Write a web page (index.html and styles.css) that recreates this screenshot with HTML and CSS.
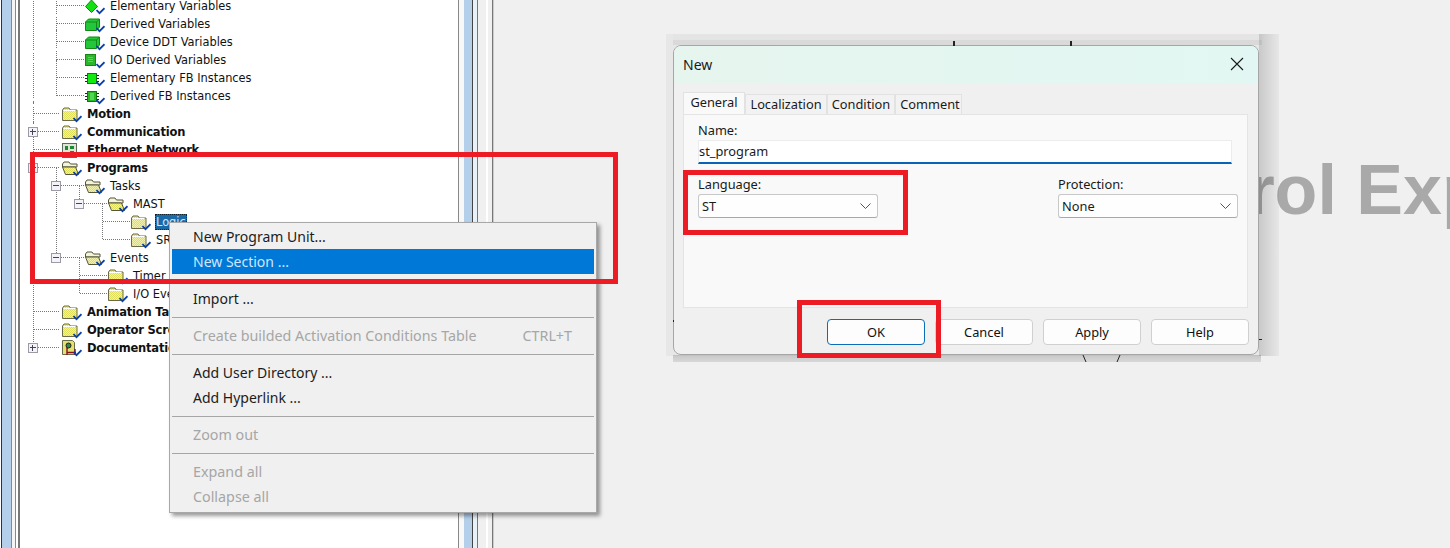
FILE: index.html
```html
<!DOCTYPE html>
<html lang="en">
<head>
<meta charset="utf-8">
<title>Control Expert - New Section</title>
<link rel="stylesheet" href="styles.css">
</head>
<body>
<svg class="defs" width="0" height="0" aria-hidden="true">
  <defs>
    <pattern id="dither" width="2" height="2" patternUnits="userSpaceOnUse">
      <rect width="2" height="2" fill="#dede5c"/>
      <rect width="1" height="1" fill="#f2f2ae"/>
      <rect x="1" y="1" width="1" height="1" fill="#f2f2ae"/>
    </pattern>
    <symbol id="check" viewBox="0 0 20 18"><path d="M11.500 13l3 3.200 5-5" fill="none" stroke="#0a3fa6" stroke-width="1.800"/></symbol>
    <symbol id="folder" viewBox="0 0 20 18">
      <path d="M.5 5L2 3h5l1.500 2h6.500v10.500H.5z" fill="url(#dither)" stroke="#6a6a48"/>
      <path d="M1.500 5.500h12" stroke="#fff" fill="none"/>
      <use href="#check"/>
    </symbol>
    <symbol id="folder-open" viewBox="0 0 20 18">
      <path d="M.5 5L2 3h5l1.500 2h6.500v3H.5z" fill="#f4f4dc" stroke="#555538"/>
      <path d="M.5 8h13l3 7.500H3.500z" fill="url(#dither)" stroke="#555538"/>
      <use href="#check"/>
    </symbol>
    <symbol id="diamond" viewBox="0 0 20 18">
      <path d="M6.500 3l6 6.500-6 6-6-6z" fill="#12e012" stroke="#0c8a0c"/>
      <use href="#check"/>
    </symbol>
    <symbol id="cube" viewBox="0 0 20 18">
      <path d="M.5 7L3.500 4h11v8l-3 3.500H.5z" fill="#22c83a" stroke="#128a12"/>
      <path d="M11.500 15V7l3-3M.5 7h11" fill="none" stroke="#128a12"/>
      <use href="#check"/>
    </symbol>
    <symbol id="square" viewBox="0 0 20 18">
      <rect x=".5" y="3.500" width="10" height="11" fill="#2ab52a" stroke="#128a12"/>
      <path d="M3 6.500h5M3 8.500h5M3 10.500h5" stroke="#5ed05e"/>
      <use href="#check"/>
    </symbol>
    <symbol id="chip" viewBox="0 0 20 18">
      <rect x="2.500" y="4.500" width="9" height="10" fill="#10ea10" stroke="#0c7a0c"/>
      <path d="M0 6.500h2M0 9.500h2M0 12.500h2M12 6.500h2M12 9.500h2M12 12.500h2" stroke="#222"/>
      <use href="#check"/>
    </symbol>
    <symbol id="chip2" viewBox="0 0 20 18">
      <rect x="2.500" y="4.500" width="9" height="10" fill="#28b828" stroke="#0c7a0c"/>
      <rect x="5" y="6" width="4" height="7" fill="#50d850"/>
      <path d="M0 6.500h2M0 9.500h2M0 12.500h2M12 6.500h2M12 9.500h2M12 12.500h2" stroke="#222"/>
      <use href="#check"/>
    </symbol>
    <symbol id="network" viewBox="0 0 20 18">
      <rect x=".5" y="2.500" width="14" height="14" fill="#dfe6d8" stroke="#5c6c5c"/>
      <path d="M3 5h3v4H3zM8 5h4v3H8zM3 12h3v4H3zM8 10h4v6H8z" fill="#1d8a2d"/>
    </symbol>
    <symbol id="doc" viewBox="0 0 20 18">
      <path d="M.5 1.500h10l2 2v12H.5z" fill="#e2e270" stroke="#6a6a48"/>
      <circle cx="6.500" cy="6.500" r="2.500" fill="#2f8a4a" stroke="#222"/>
      <path d="M5 16V9h1M5 13.500h9M13 10v6" fill="none" stroke="#8a1020" stroke-width="1.400"/>
      <use href="#check"/>
    </symbol>
  </defs>
</svg>

<div class="rail rail-left"></div>

<nav class="tree">
  <svg class="tree-lines" width="434" height="548" viewBox="20 0 434 548" aria-hidden="true">
    <path d="M33.500 0V347M56.500 0V95M56.500 167V257M79.500 185V203M79.500 257V293M102.500 203V239
             M57 5H84M57 23H84M57 41H84M57 59H84M57 77H84M57 95H84
             M34 113H60M34 131H60M34 149H60M34 167H60M34 311H60M34 329H60M34 347H60
             M57 185H84M57 257H84M80 203H107M80 275H107M80 293H107M103 221H130M103 239H130"
          fill="none" stroke="#777" stroke-dasharray="1 1" shape-rendering="crispEdges" transform="translate(0 .5)"/>
  </svg>
  <ul class="tree-list">
    <li class="row l1"><svg class="ico"><use href="#diamond"/></svg><span>Elementary Variables</span></li>
    <li class="row l1"><svg class="ico"><use href="#cube"/></svg><span>Derived Variables</span></li>
    <li class="row l1"><svg class="ico"><use href="#cube"/></svg><span>Device DDT Variables</span></li>
    <li class="row l1"><svg class="ico"><use href="#square"/></svg><span>IO Derived Variables</span></li>
    <li class="row l1"><svg class="ico"><use href="#chip"/></svg><span>Elementary FB Instances</span></li>
    <li class="row l1"><svg class="ico"><use href="#chip2"/></svg><span>Derived FB Instances</span></li>
    <li class="row l0 strong"><svg class="ico"><use href="#folder"/></svg><span>Motion</span></li>
    <li class="row l0 strong"><i class="tog plus"></i><svg class="ico"><use href="#folder"/></svg><span>Communication</span></li>
    <li class="row l0 strong"><svg class="ico"><use href="#network"/></svg><span>Ethernet Network</span></li>
    <li class="row l0 strong"><i class="tog minus"></i><svg class="ico"><use href="#folder-open"/></svg><span>Programs</span></li>
    <li class="row l1"><i class="tog minus"></i><svg class="ico"><use href="#folder-open"/></svg><span>Tasks</span></li>
    <li class="row l2"><i class="tog minus"></i><svg class="ico"><use href="#folder-open"/></svg><span>MAST</span></li>
    <li class="row l3"><svg class="ico"><use href="#folder"/></svg><span class="selected">Logic</span></li>
    <li class="row l3"><svg class="ico"><use href="#folder"/></svg><span>SR0</span></li>
    <li class="row l1"><i class="tog minus"></i><svg class="ico"><use href="#folder-open"/></svg><span>Events</span></li>
    <li class="row l2"><svg class="ico"><use href="#folder"/></svg><span>Timer Events</span></li>
    <li class="row l2"><svg class="ico"><use href="#folder"/></svg><span>I/O Events</span></li>
    <li class="row l0 strong"><svg class="ico"><use href="#folder"/></svg><span>Animation Tables</span></li>
    <li class="row l0 strong"><svg class="ico"><use href="#folder"/></svg><span>Operator Screens</span></li>
    <li class="row l0 strong"><i class="tog plus"></i><svg class="ico"><use href="#doc"/></svg><span>Documentation</span></li>
  </ul>
</nav>

<div class="rail rail-right"></div>

<main class="canvas">
  <div class="splash">Control Expert</div>
</main>

<div class="backdrop">
  <i class="tick tick-a"></i><i class="tick tick-b"></i><i class="tick tick-c"></i><i class="tick tick-d"></i>
  <svg class="arc" width="40" height="8" viewBox="0 0 40 8" aria-hidden="true"><path d="M1 0l3 7M38 0l-3 7" fill="none" stroke="#222"/></svg>
</div>

<section class="dialog">
  <header class="dialog-title">
    <span>New</span>
    <svg class="close" width="14" height="14" viewBox="0 0 14 14" aria-hidden="true"><path d="M1 1l12 12M13 1L1 13" fill="none" stroke="#1a1a1a" stroke-width="1.100"/></svg>
  </header>
  <div class="tabs">
    <span class="tab active">General</span>
    <span class="tab tab-loc">Localization</span>
    <span class="tab tab-cond">Condition</span>
    <span class="tab tab-com">Comment</span>
  </div>
  <div class="panel">
    <label class="field-label">Name:</label>
    <div class="input">st_program</div>
    <div class="field-row">
      <div class="field">
        <label class="field-label">Language:</label>
        <div class="combo"><span>ST</span><svg class="chev" width="11" height="6" viewBox="0 0 11 6" aria-hidden="true"><path d="M.5.500l5 5 5-5" fill="none" stroke="#555"/></svg></div>
      </div>
      <div class="field">
        <label class="field-label">Protection:</label>
        <div class="combo"><span>None</span><svg class="chev" width="11" height="6" viewBox="0 0 11 6" aria-hidden="true"><path d="M.5.500l5 5 5-5" fill="none" stroke="#555"/></svg></div>
      </div>
    </div>
  </div>
  <div class="actions">
    <button class="btn primary">OK</button>
    <button class="btn">Cancel</button>
    <button class="btn">Apply</button>
    <button class="btn">Help</button>
  </div>
</section>

<ul class="menu">
  <li class="item">New Program Unit...</li>
  <li class="item hot">New Section ...</li>
  <li class="sep"></li>
  <li class="item">Import ...</li>
  <li class="sep"></li>
  <li class="item off"><span>Create builded Activation Conditions Table</span><span>CTRL+T</span></li>
  <li class="sep"></li>
  <li class="item">Add User Directory ...</li>
  <li class="item">Add Hyperlink ...</li>
  <li class="sep"></li>
  <li class="item off">Zoom out</li>
  <li class="sep"></li>
  <li class="item off">Expand all</li>
  <li class="item off">Collapse all</li>
</ul>

<div class="mark mark-tree"></div>
<div class="mark mark-lang"></div>
<div class="mark mark-ok"></div>
</body>
</html>
```

FILE: styles.css
```css
* { box-sizing: border-box; }
html, body { margin: 0; padding: 0; }
body {
  position: relative;
  display: flex;
  width: 1450px;
  height: 548px;
  overflow: hidden;
  background: #f0f0f0;
  font-family: "Noto Sans", sans-serif;
  color: #1a1a1a;
}
.defs { position: absolute; }
ul { list-style: none; margin: 0; padding: 0; }

/* splitter rails */
.rail { flex: none; height: 100%; }
.rail-left {
  width: 20px;
  background: linear-gradient(90deg,
    #fff 0 1px, #333 1px 2px, #b4cfe9 2px 11px, #888 11px 12px,
    #f4f4f4 12px 15px, #888 15px 16px, #fff 16px 18px, #777 18px 20px);
}
.rail-right {
  width: 40px;
  background: linear-gradient(90deg,
    #fff 0 4px, #888 4px 5px, #f8f8f8 5px 10px, #b4cfe9 10px 18px, #444 18px 19px,
    #e8f0f8 19px 23px, #777 23px 24px, #f0f0f0 24px 32px, #fff 32px 34px,
    #f0f0f0 34px 38px, #777 38px 39px, #ccc 39px 40px);
}

/* tree */
.tree {
  position: relative;
  flex: none;
  width: 434px;
  height: 100%;
  background: #fff;
  overflow: hidden;
  font-family: "DejaVu Sans", sans-serif;
  font-size: 11.4px;
  color: #111;
}
.tree-lines { position: absolute; left: 0; top: 0; }
.tree-list { position: relative; margin-top: -3px; }
.row {
  position: relative;
  display: flex;
  align-items: center;
  height: 18px;
  white-space: nowrap;
}
.l0 { padding-left: 42px; }
.l1 { padding-left: 65px; }
.l2 { padding-left: 88px; }
.l3 { padding-left: 111px; }
.strong { font-weight: 700; font-size: 11.5px; letter-spacing: -.2px; }
.ico { flex: none; width: 20px; height: 18px; margin-right: 5px; margin-top: -1px; }
.tog {
  position: absolute;
  top: 4px;
  width: 10px;
  height: 10px;
  background: #f4f4f8;
  border: 1px solid #9a9aa8;
}
.tog::before {
  content: "";
  position: absolute;
  left: 1px; right: 1px; top: 3px;
  height: 2px;
  border-top: 1px solid #445;
}
.plus::after {
  content: "";
  position: absolute;
  top: 1px; bottom: 1px; left: 3px;
  width: 2px;
  border-left: 1px solid #445;
}
.l0 .tog { left: 8px; }
.l1 .tog { left: 31px; }
.l2 .tog { left: 54px; }
.selected {
  margin-left: -1px;
  padding: 1px 1px;
  background: #1a6aa8;
  color: #cfe8ff;
  outline: 1px dotted #123;
  outline-offset: -1px;
}

/* canvas */
.canvas { flex: 1; height: 100%; }
.splash {
  position: absolute;
  left: 1088px;
  top: 150px;
  font-family: "Liberation Sans", sans-serif;
  font-weight: 700;
  font-size: 70px;
  line-height: 80px;
  color: #a9a9a9;
  white-space: nowrap;
}

/* captured dialog window */
.backdrop {
  position: absolute;
  left: 666px;
  top: 34px;
  width: 613px;
  height: 322px;
  background:
    linear-gradient(90deg, rgba(0, 0, 0, .13), rgba(0, 0, 0, 0)) 100% 0 / 20px 100% no-repeat,
    linear-gradient(rgba(0, 0, 0, .01) 6px, rgba(0, 0, 0, .06) 6px) 7px 0 / 589px 11px no-repeat,
    rgba(0, 0, 0, .035);
}
.backdrop::after {
  content: "";
  position: absolute;
  left: 7px;
  top: 321px;
  width: 588px;
  height: 7px;
  background: linear-gradient(rgba(0, 0, 0, .17), rgba(0, 0, 0, .1));
}
.tick { position: absolute; background: #222; z-index: 1; }
.tick-a { left: 287px; top: 7px; width: 2px; height: 5px; }
.tick-b { left: 404px; top: 7px; width: 2px; height: 5px; }
.tick-c { left: 593px; top: 305px; width: 3px; height: 1px; }
.tick-d { left: 7px; top: 286px; width: 1px; height: 2px; }
.arc { position: absolute; left: 416px; top: 321px; z-index: 1; }

.dialog {
  position: absolute;
  left: 673px;
  top: 45px;
  width: 586px;
  height: 310px;
  display: flex;
  flex-direction: column;
  background: #f0f0f0;
  border: 1px solid #a6a6a6;
  border-radius: 8px;
  overflow: hidden;
  font-size: 12.8px;
}
.dialog-title {
  flex: none;
  display: flex;
  align-items: center;
  justify-content: space-between;
  height: 38px;
  padding: 0 14px 2px 9px;
  background: linear-gradient(90deg, #e6f5ee, #e2f7f3);
  font-size: 14px;
}
.tabs {
  flex: none;
  display: flex;
  align-items: flex-end;
  height: 30px;
  padding: 0 0 0 9px;
}
.tab {
  display: flex;
  align-items: center;
  justify-content: center;
  height: 20px;
  padding-bottom: 2px;
  background: #f2f2f2;
  border: 1px solid #e2e2e2;
  border-bottom: 0;
  white-space: nowrap;
}
.tab.active {
  width: 62px;
  height: 22px;
  padding-bottom: 4px;
  background: #f9f9f9;
}
.tab-loc { width: 82px; }
.tab-cond { width: 68px; }
.tab-com { width: 67px; padding-left: 3px; }
.panel {
  flex: none;
  height: 194px;
  margin: 0 10px 0 9px;
  padding: 6px 14px;
  background: #f9f9f9;
  border: 1px solid #e4e4e4;
}
.field-label { display: block; height: 19px; line-height: 19px; }
.input {
  width: 534px;
  height: 24px;
  line-height: 20px;
  padding: 0;
  background: #fff;
  border: 1px solid #ececec;
  border-bottom: 2px solid #0b62b8;
}
.field-row {
  display: flex;
  justify-content: space-between;
  margin-top: 11px;
  width: 540px;
}
.field { width: 180px; }
.combo {
  display: flex;
  align-items: center;
  justify-content: space-between;
  height: 24px;
  padding: 0 4px 0 3px;
  background: #fefefe;
  border: 1px solid #c8c8c8;
  border-bottom-color: #a8a8a8;
  border-radius: 3px;
}
.chev { margin-right: 2px; }
.actions {
  flex: 1;
  display: flex;
  justify-content: flex-end;
  gap: 10px;
  padding: 11px 9px 0 0;
}
.btn {
  width: 98px;
  height: 26px;
  padding: 0;
  font: inherit;
  color: #111;
  background: #fdfdfd;
  border: 1px solid #d0d0d0;
  border-radius: 4px;
}
.btn.primary { border-color: #0b6cb8; }

/* context menu */
.menu {
  position: absolute;
  left: 169px;
  top: 222px;
  width: 428px;
  height: 291px;
  padding: 1px 2px 2px;
  background: #f0f0f0;
  border: 1px solid #a8a8a8;
  box-shadow: 3px 3px 4px rgba(0, 0, 0, .4);
  font-size: 14px;
  color: #1c1c1c;
}
.item {
  display: flex;
  justify-content: space-between;
  height: 25px;
  line-height: 25px;
  padding: 0 22px 0 21px;
  white-space: nowrap;
}
.item.hot { background: #0078d7; color: #cfe6fb; }
.item.off { color: #a6a6a6; font-size: 14.3px; }
.sep { position: relative; height: 12px; }
.sep::after {
  content: "";
  position: absolute;
  left: 0; right: 0; top: 6px;
  height: 1px;
  background: #a6a6a6;
}

/* red annotation frames */
.mark {
  position: absolute;
  border: 5px solid #ed1c24;
}
.mark-tree { left: 30px; top: 152px; width: 588px; height: 132px; }
.mark-lang { left: 683px; top: 170px; width: 225px; height: 65px; }
.mark-ok { left: 797px; top: 300px; width: 144px; height: 58px; }
```
